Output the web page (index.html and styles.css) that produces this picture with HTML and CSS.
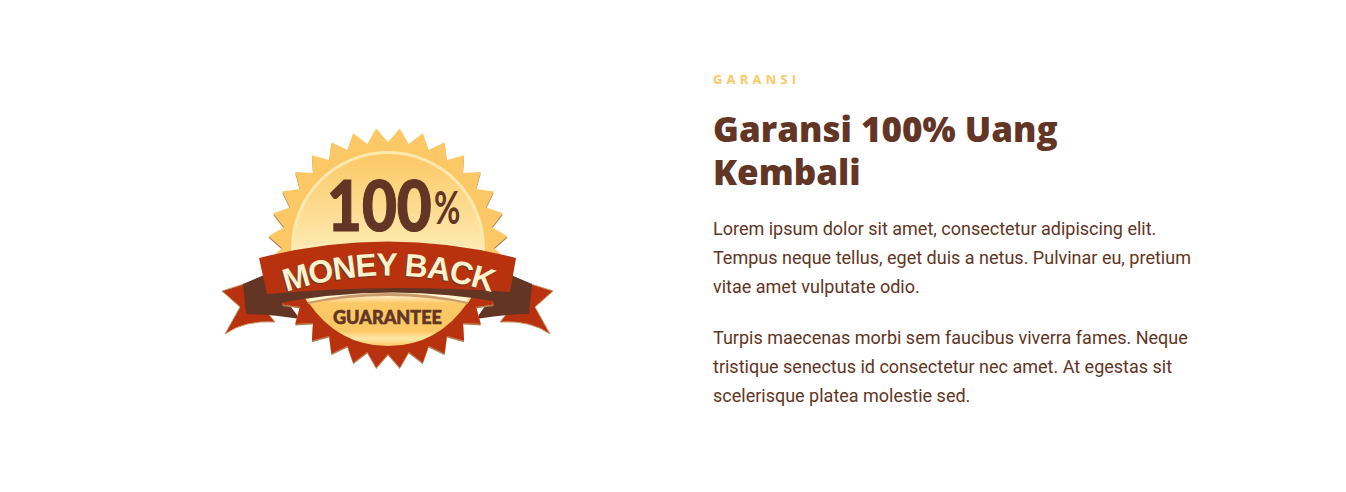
FILE: index.html
```html
<!DOCTYPE html>
<html lang="en">
<head>
    <meta charset="UTF-8">
    <title>Garansi</title>
    <link rel="stylesheet" href="styles.css">
</head>
<body>
    <section class="guarantee">
        <div class="guarantee-image">
            <svg class="badge" width="340" height="250" viewBox="218 125 340 250" role="img" aria-label="100% Money Back Guarantee">
                <defs>
                    <path id="star" d="M0,-106 L11.8,-119.4 20.7,-104 34.8,-114.8 40.6,-98 56.6,-105.8 58.9,-88.1 76.1,-92.8 75,-75 92.8,-76.1 88.1,-58.9 105.8,-56.6 98,-40.6 114.8,-34.8 104,-20.7 119.4,-11.8 106,0 119.4,11.8 104,20.7 114.8,34.8 98,40.6 105.8,56.6 88.1,58.9 92.8,76.1 75,75 76.1,92.8 58.9,88.1 56.6,105.8 40.6,98 34.8,114.8 20.7,104 11.8,119.4 0,106 -11.8,119.4 -20.7,104 -34.8,114.8 -40.6,98 -56.6,105.8 -58.9,88.1 -76.1,92.8 -75,75 -92.8,76.1 -88.1,58.9 -105.8,56.6 -98,40.6 -114.8,34.8 -104,20.7 -119.4,11.8 -106,0 -119.4,-11.8 -104,-20.7 -114.8,-34.8 -98,-40.6 -105.8,-56.6 -88.1,-58.9 -92.8,-76.1 -75,-75 -76.1,-92.8 -58.9,-88.1 -56.6,-105.8 -40.6,-98 -34.8,-114.8 -20.7,-104 -11.8,-119.4 Z"/>
                    <linearGradient id="disc" x1="0" y1="0" x2="0" y2="1">
                        <stop offset="0" stop-color="#fcc866"/>
                        <stop offset="0.45" stop-color="#fde6a8"/>
                        <stop offset="0.6" stop-color="#fff4d2"/>
                        <stop offset="1" stop-color="#fff4d2"/>
                    </linearGradient>
                    <linearGradient id="bowl" x1="0" y1="0" x2="0" y2="1">
                        <stop offset="0" stop-color="#fff3cf"/>
                        <stop offset="0.16" stop-color="#fcc866"/>
                        <stop offset="0.7" stop-color="#fcc866"/>
                        <stop offset="0.85" stop-color="#fee7a8"/>
                        <stop offset="1" stop-color="#fcc866"/>
                    </linearGradient>
                    <clipPath id="lower-half">
                        <rect x="218" y="298" width="340" height="80"/>
                    </clipPath>
                    <path id="money-curve" d="M283,294 Q388,259 494,294"/>
                </defs>

                <!-- ribbon tails -->
                <path class="tail-red" d="M222,292 L244,285 L275,323 Q245,321 225,335 L240,308 Z"/>
                <path class="tail-dark" d="M243,285 L264,276 L285,300 L300,320 Q270,315 246,315 Z"/>
                <path class="tail-red" d="M553,292 L531,285 L500,323 Q530,321 550,335 L535,308 Z"/>
                <path class="tail-dark" d="M532,285 L511,276 L490,300 L476,320 Q505,315 529,315 Z"/>

                <!-- seal -->
                <use href="#star" transform="translate(388,250.5)" fill="#a9825a"/>
                <use href="#star" transform="translate(388,249)" fill="#fcc866"/>
                <g clip-path="url(#lower-half)">
                    <use href="#star" transform="translate(388,249)" fill="#b8320f"/>
                </g>
                <circle cx="388" cy="249" r="97" fill="#fde9ae"/>
                <circle cx="388" cy="249" r="94" fill="url(#disc)"/>

                <text class="badge-hundred" transform="translate(327,232) scale(0.86,1)">100</text>
                <text class="badge-percent" transform="translate(434,225) scale(0.7,1)">%</text>

                <!-- guarantee bowl -->
                <path d="M306,304 Q388,288 470,304 Q440,349 388,349 Q336,349 306,304 Z" fill="#b8320f"/>
                <path d="M308,303 Q388,289 468,303 Q438,347 388,347 Q338,347 308,303 Z" fill="url(#bowl)"/>
                <text class="badge-guarantee" x="333" y="325" textLength="109" lengthAdjust="spacingAndGlyphs">GUARANTEE</text>

                <!-- front band -->
                <path class="band-dark" d="M264,288 L512,288 L505,304 Q388,282 269,306 Z"/>
                <path class="band-tan" d="M308,303 Q388,285 468,303 L468,305 Q388,289 308,305 Z"/>
                <path class="band-front" d="M259,259 Q388,226 516,259 L510,293 Q388,284 267,295 Z"/>
                <text class="badge-money badge-money-shadow"><textPath href="#money-curve" startOffset="50%" text-anchor="middle">MONEY BACK</textPath></text>
                <text class="badge-money"><textPath href="#money-curve" startOffset="50%" text-anchor="middle">MONEY BACK</textPath></text>
            </svg>
        </div>
        <div class="guarantee-text">
            <span class="eyebrow">GARANSI</span>
            <h2>Garansi 100% Uang<br>Kembali</h2>
            <p>Lorem ipsum dolor sit amet, consectetur adipiscing elit. Tempus neque tellus, eget duis a netus. Pulvinar eu, pretium vitae amet vulputate odio.</p>
            <p>Turpis maecenas morbi sem faucibus viverra fames. Neque tristique senectus id consectetur nec amet. At egestas sit scelerisque platea molestie sed.</p>
        </div>
    </section>
</body>
</html>
```

FILE: styles.css
```css
body {
    margin: 0;
    background-color: #fff;
    color: #5f3524; /* Brown */
    font-family: Roboto, sans-serif;
}
.guarantee {
    display: flex;
    align-items: center;
    width: 1140px;
    height: 492px;
    margin: 0 auto;
}
.guarantee-image {
    flex: 0 0 50%;
    display: flex;
    justify-content: center;
}
.badge {
    display: block;
    margin-top: 6px;
}
.guarantee-text {
    flex: 0 0 50%;
    box-sizing: border-box;
    padding: 0 40px 13px;
}
.eyebrow {
    display: block;
    font-family: "Open Sans", sans-serif;
    font-size: 13px;
    font-weight: 700;
    line-height: 18px;
    letter-spacing: 4.2px;
    color: #fcc866;
}
h2 {
    margin: 19px 0 21px;
    font-family: "Open Sans", sans-serif;
    font-size: 35px;
    font-weight: 800;
    line-height: 43px;
    color: #623525;
}
p {
    margin: 0 0 22px;
    font-size: 18px;
    line-height: 29px;
}
p:last-child {
    margin-bottom: 0;
}

/* badge */
.tail-red {
    fill: #b8320f;
    stroke: #c99a6a;
    stroke-width: 1;
}
.tail-dark {
    fill: #623525;
}
.band-dark {
    fill: #623525;
}
.band-tan {
    fill: #c99a6a;
}
.band-front {
    fill: #b8320f;
}
.badge-hundred {
    font-family: Lato, sans-serif;
    font-size: 70px;
    font-weight: 900;
    fill: #623525;
    stroke: #623525;
    stroke-width: 1.2;
}
.badge-percent {
    font-family: Lato, sans-serif;
    font-size: 46px;
    font-weight: 700;
    fill: #623525;
}
.badge-money {
    font-family: "Liberation Sans", sans-serif;
    font-size: 32px;
    font-weight: 700;
    letter-spacing: -1px;
    fill: #fff3cf;
}
.badge-money-shadow {
    fill: #7a3a20;
    transform: translate(-1.5px, 1.5px);
}
.badge-guarantee {
    font-family: Lato, sans-serif;
    font-size: 19px;
    font-weight: 900;
    fill: #623525;
    stroke: #623525;
    stroke-width: 0.6;
}
```
